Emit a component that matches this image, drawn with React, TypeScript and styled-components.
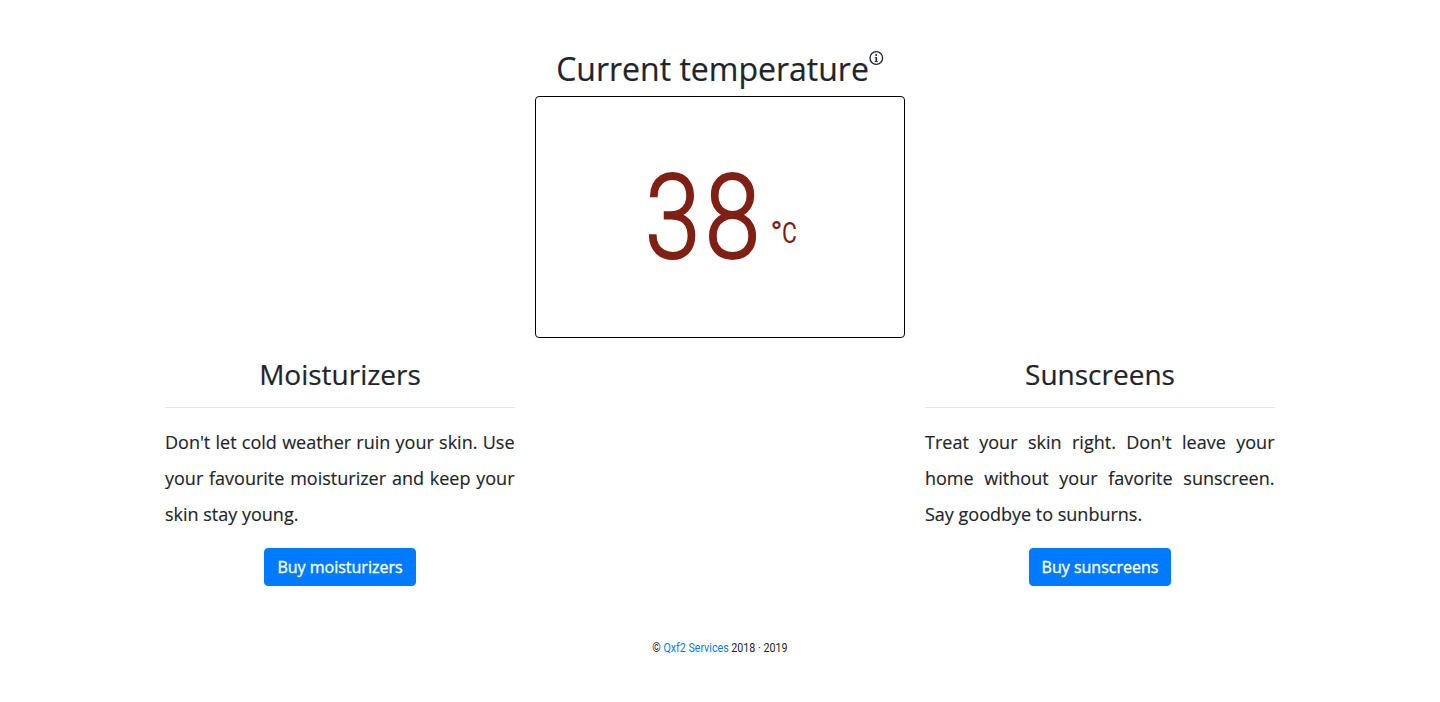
import React from 'react';
import styled, { createGlobalStyle } from 'styled-components';

const GlobalStyle = createGlobalStyle`
  *, *::before, *::after { box-sizing: border-box; }
  body {
    margin: 0;
    background: #fff;
    color: #212529;
    font-family: 'Open Sans', 'Noto Sans', sans-serif;
    font-size: 16px;
    line-height: 1.5;
  }
`;

const Page = styled.main`
  width: 1110px;
  margin: 0 auto;
  padding-top: 50px;
`;

const Current = styled.section`
  width: 370px;
  margin: 0 auto;
`;

const Title = styled.h2`
  display: flex;
  justify-content: center;
  margin: 0 0 8px;
  font-size: 32px;
  font-weight: 400;
  line-height: 38px;
  white-space: nowrap;
  -webkit-text-stroke: 0.2px;
`;

const InfoIcon = styled.svg`
  flex: none;
  width: 15px;
  height: 15px;
  margin-top: 1px;
`;

const Panel = styled.div`
  display: flex;
  justify-content: center;
  height: 242px;
  border: 1px solid #000;
  border-radius: 4px;
  color: #802015;
  font-family: Roboto, sans-serif;
  white-space: nowrap;
`;

const Reading = styled.span`
  display: flex;
  align-items: baseline;
  padding-top: 51px;
`;

const Degrees = styled.span`
  width: 126px;
  font-size: 117.5px;
  font-weight: 300;
  line-height: 140px;
  letter-spacing: 5px;
  -webkit-text-stroke: 2.2px;
  transform: scaleX(0.85);
  transform-origin: left;
`;

const Unit = styled.span`
  display: flex;
  align-items: baseline;
  width: 25px;
  font-size: 30px;
  font-weight: 400;
  transform: translateY(-15px);
`;

const DegreeSign = styled.span`
  width: 13px;
  font-size: 32px;
  -webkit-text-stroke: 0.3px;
  transform: translateY(1px);
`;

const Scale = styled.span`
  transform: scaleX(0.76);
  transform-origin: left;
`;

const Products = styled.div`
  display: flex;
  justify-content: space-between;
  padding-top: 20px;
`;

const Product = styled.section`
  display: flex;
  flex-direction: column;
  align-items: center;
  width: 350px;
`;

const ProductTitle = styled.h3`
  width: 100%;
  height: 50px;
  margin: 0 0 16px;
  border-bottom: 1px solid #e5e5e5;
  font-size: 28px;
  font-weight: 400;
  line-height: 32px;
  text-align: center;
  -webkit-text-stroke: 0.2px;
`;

const Description = styled.p`
  width: 349.5px;
  align-self: flex-start;
  margin: 0 0 16px;
  font-size: 18px;
  line-height: 36px;
  text-align: justify;
  -webkit-text-stroke: 0.15px;
`;

const Button = styled.button`
  height: 38px;
  padding: 6px 12px;
  border: 1px solid #007bff;
  border-radius: 4px;
  background: #007bff;
  color: #fff;
  font: 400 16px/24px 'Open Sans', 'Noto Sans', sans-serif;
  white-space: nowrap;
  -webkit-text-stroke: 0.35px;
`;

const Footer = styled.footer`
  display: flex;
  justify-content: center;
  margin-top: 53px;
  font-family: Roboto, sans-serif;
  font-size: 12px;
  line-height: 18px;
`;

const Credit = styled.p`
  margin: 0;
  white-space: nowrap;
  transform: scaleX(0.89);
`;

const CreditLink = styled.a`
  color: #007bff;
  text-decoration: none;
`;

const products = [
  {
    title: 'Moisturizers',
    text: "Don't let cold weather ruin your skin. Use your favourite moisturizer and keep your skin stay young.",
    action: 'Buy moisturizers',
  },
  {
    title: 'Sunscreens',
    text: "Treat your skin right. Don't leave your home without your favorite sunscreen. Say goodbye to sunburns.",
    action: 'Buy sunscreens',
  },
];

export default function App() {
  return (
    <>
      <GlobalStyle />
      <Page>
        <Current>
          <Title>
            Current temperature
            <InfoIcon viewBox="0 0 15 15" aria-label="Information">
              <circle cx="7.3" cy="7" r="6.3" fill="none" stroke="#212529" strokeWidth="1.3" />
              <circle cx="7.2" cy="4" r="1.05" fill="#212529" />
              <path d="M5.7 5.9h2.4v4.3h.9v.9H5.7v-.9h.8V6.8h-.8z" fill="#212529" />
            </InfoIcon>
          </Title>
          <Panel>
            <Reading>
              <Degrees>38</Degrees>
              <Unit>
                <DegreeSign>°</DegreeSign>
                <Scale>C</Scale>
              </Unit>
            </Reading>
          </Panel>
        </Current>
        <Products>
          {products.map((product) => (
            <Product key={product.title}>
              <ProductTitle>{product.title}</ProductTitle>
              <Description>{product.text}</Description>
              <Button type="button">{product.action}</Button>
            </Product>
          ))}
        </Products>
        <Footer>
          <Credit>
            © <CreditLink href="#">Qxf2 Services</CreditLink> 2018 · 2019
          </Credit>
        </Footer>
      </Page>
    </>
  );
}
